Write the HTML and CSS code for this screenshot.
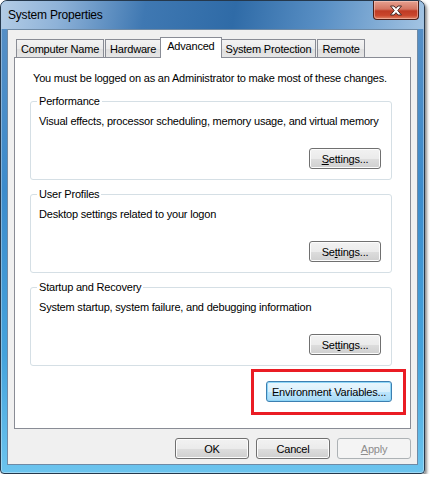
FILE: index.html
```html
<!DOCTYPE html>
<html lang="en">
<head>
  <meta charset="UTF-8" />
  <meta name="viewport" content="width=device-width, initial-scale=1.0"/>
  <title>System Properties</title>
  <link rel="stylesheet" href="styles.css">
</head>
<body>
  <div class="window">
    <div class="titlebar">
      <span class="title">System Properties</span>
      <button class="close" aria-label="Close">
        <svg width="14" height="11" viewBox="0 0 14 11">
          <path d="M1.5 1 H5 L7 3.3 L9 1 H12.5 L8.8 5.5 L12.5 10 H9 L7 7.7 L5 10 H1.5 L5.2 5.5 Z" fill="#fff" stroke="#4a2a26" stroke-width="1" stroke-linejoin="round"/>
        </svg>
      </button>
    </div>

    <div class="client">
      <!-- tab strip -->
      <ul class="tabs">
        <li class="tab">Computer Name</li>
        <li class="tab">Hardware</li>
        <li class="tab active">Advanced</li>
        <li class="tab">System Protection</li>
        <li class="tab">Remote</li>
      </ul>

      <div class="panel">
        <p class="note">You must be logged on as an Administrator to make most of these changes.</p>

        <fieldset class="group">
          <legend>Performance</legend>
          <p class="desc">Visual effects, processor scheduling, memory usage, and virtual memory</p>
          <div class="group-actions">
            <button class="btn"><u>S</u>ettings...</button>
          </div>
        </fieldset>

        <fieldset class="group">
          <legend>User Profiles</legend>
          <p class="desc">Desktop settings related to your logon</p>
          <div class="group-actions">
            <button class="btn">Se<u>t</u>tings...</button>
          </div>
        </fieldset>

        <fieldset class="group">
          <legend>Startup and Recovery</legend>
          <p class="desc">System startup, system failure, and debugging information</p>
          <div class="group-actions">
            <button class="btn">Set<u>t</u>ings...</button>
          </div>
        </fieldset>

        <div class="highlight">
          <button class="btn btn-default">Environment Variables...</button>
        </div>
      </div>

      <div class="dialog-buttons">
        <button class="btn">OK</button>
        <button class="btn">Cancel</button>
        <button class="btn" disabled><u>A</u>pply</button>
      </div>
    </div>
  </div>
</body>
</html>
```

FILE: styles.css
```css
body {
  margin: 0;
  background: #fff;
  font-family: "Liberation Sans", Arial, sans-serif;
  font-size: 11px;
  letter-spacing: -0.2px;
  color: #000;
}

.window {
  box-sizing: border-box;
  width: 425px;
  height: 474px;
  border: 1px solid #25384c;
  border-radius: 7px 7px 4px 4px;
  padding: 0 6px 8px 6px;
  background: linear-gradient(to bottom, #5a8fc4 0%, #3d8ccc 40%, #45a3dc 75%, #6cc4ee 100%);
  box-shadow: 2px 2px 3px rgba(0, 0, 0, 0.45), inset 0 0 0 1px rgba(255, 255, 255, 0.35);
  display: flex;
  flex-direction: column;
}

.titlebar {
  height: 28px;
  margin: 0 -6px;
  padding-left: 7px;
  display: flex;
  justify-content: space-between;
  align-items: flex-start;
  border-radius: 6px 6px 0 0;
  background: linear-gradient(100deg, #b4cde6 0%, #8eb2d8 14%, #3f78b2 34%, #2f6ba7 55%, #5a90c5 76%, #a3c4e3 100%);
}

.title {
  line-height: 29px;
  font-size: 12px;
}

.close {
  box-sizing: border-box;
  width: 46px;
  height: 19px;
  margin-right: 5px;
  padding: 0;
  border: 1px solid #4b1e17;
  border-top: none;
  border-radius: 0 0 4px 4px;
  background: linear-gradient(to bottom, #e6a190 0%, #d47562 45%, #bf3b24 55%, #c9462c 80%, #e08466 100%);
  box-shadow: inset 0 0 0 1px rgba(255, 220, 210, 0.45);
  display: flex;
  align-items: center;
  justify-content: center;
}

.client {
  box-sizing: border-box;
  height: 436px;
  border: 1px solid #6f8aa5;
  background: #f0f0f0;
  padding-top: 7px;
  display: flex;
  flex-direction: column;
}

/* tabs */
.tabs {
  list-style: none;
  margin: 0 6px;
  padding: 0 0 0 2px;
  display: flex;
  align-items: flex-end;
  height: 20px;
}

.tab {
  box-sizing: border-box;
  height: 18px;
  padding: 0 4px;
  margin-right: 1px;
  border: 1px solid #898c95;
  border-bottom: none;
  background: linear-gradient(to bottom, #f3f3f3 0%, #ebebeb 50%, #dedede 51%, #e6e6e6 100%);
  line-height: 18px;
  white-space: nowrap;
}

.tab.active {
  height: 21px;
  margin: 0 -1px -1px -2px;
  padding: 0 6px;
  background: #fff;
  line-height: 17px;
  position: relative;
  z-index: 1;
}

.panel {
  box-sizing: border-box;
  height: 372px;
  margin: 0 6px;
  padding: 13px 18px 0 15px;
  border: 1px solid #898c95;
  background: #fff;
  display: flex;
  flex-direction: column;
}

.note {
  margin: 0 0 8px 3px;
  line-height: 15px;
}

.group {
  margin: 0 0 7px 0;
  padding: 0 10px 10px 8px;
  border: 1px solid #d5dfe5;
  border-radius: 3px;
  min-inline-size: 0;
}

.group legend {
  padding: 0 2px;
  margin-left: -2px;
  line-height: 15px;
}

.desc {
  margin: 5px 0 0;
  line-height: 15px;
}

.group-actions {
  display: flex;
  justify-content: flex-end;
  margin-top: 19px;
}

/* buttons */
.btn {
  box-sizing: border-box;
  height: 21px;
  min-width: 72px;
  padding: 0 8px;
  font-family: inherit;
  font-size: 11px;
  letter-spacing: -0.2px;
  white-space: nowrap;
  color: #000;
  border: 1px solid #707070;
  border-radius: 3px;
  background: linear-gradient(to bottom, #f2f2f2 0%, #ebebeb 50%, #dddddd 51%, #cfcfcf 100%);
  box-shadow: inset 0 0 0 1px #fcfcfc;
}

.btn-default {
  width: 126px;
  padding: 0 4px;
  border-color: #3c7fb1;
  background: linear-gradient(to bottom, #eaf6fd 0%, #d9f0fc 50%, #bee6fd 51%, #a7d9f5 100%);
  box-shadow: inset 0 0 0 1px #8fd6f7;
}

.btn:disabled {
  color: #8d8d8d;
  border-color: #adb2b5;
  background: #f4f4f4;
  box-shadow: none;
}

.highlight {
  box-sizing: border-box;
  width: 155px;
  margin: -4px -14px 0 auto;
  padding: 9px 11px 10px 12px;
  border: 3px solid #ea1c24;
}

.dialog-buttons {
  display: flex;
  justify-content: flex-end;
  gap: 7px;
  margin: 9px 6px 0;
}

.dialog-buttons .btn {
  width: 74px;
}
```
